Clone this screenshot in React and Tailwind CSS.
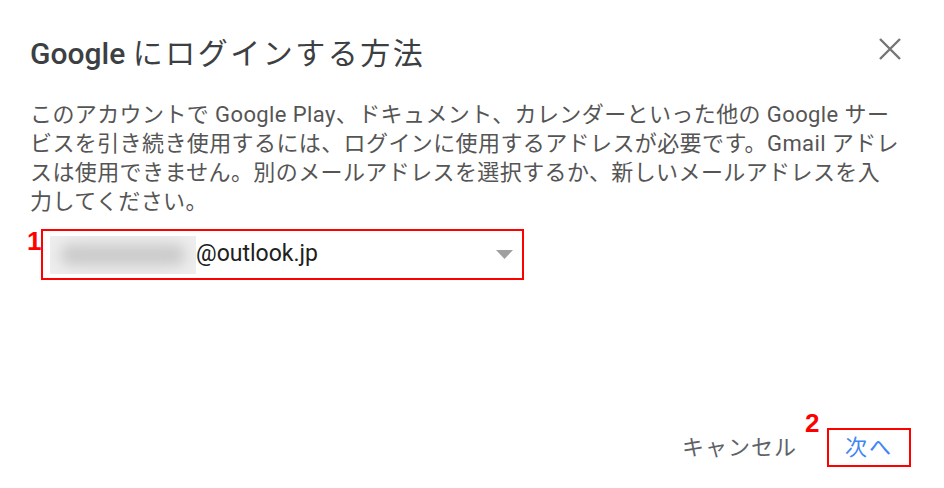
import React from "react";

const CloseIcon = () => (
  <svg width="22" height="22" viewBox="0 0 22 22" className="mt-[2px]">
    <path d="M1 1 L21 21 M21 1 L1 21" stroke="#757575" strokeWidth="2.4" fill="none" />
  </svg>
);

const App = () => {
  return (
    <div className="w-[944px] h-[488px] bg-white flex flex-col font-['Roboto','Noto_Sans_CJK_JP',sans-serif] overflow-hidden">
      <div className="flex justify-between items-start pt-[36px] pl-[30px] pr-[43px]">
        <h1 className="text-[30px] leading-[36px] text-[#3c4043]">
          <span className="font-medium">Google</span>{" "}
          <span className="tracking-[2.5px]">にログインする方法</span>
        </h1>
        <CloseIcon />
      </div>

      <p className="mt-[28px] pl-[30px] text-[22px] leading-[29px] tracking-[0.4px] text-[#555555]">
        このアカウントで Google Play、ドキュメント、カレンダーといった他の Google サー
        <br />
        ビスを引き続き使用するには、ログインに使用するアドレスが必要です。Gmail アドレ
        <br />
        スは使用できません。別のメールアドレスを選択するか、新しいメールアドレスを入
        <br />
        力してください。
      </p>

      <div className="relative ml-[41px] mt-[13px] w-[483px] h-[51px] border-2 border-[#ff0000] flex items-center pl-[7px] pr-[9px]">
        <span className="absolute left-[-16px] top-[-3px] text-[26px] leading-[26px] font-bold text-[#ff0000] font-['Liberation_Sans',sans-serif]">
          1
        </span>
        <div className="relative w-[146px] h-[38px] bg-[#eeeeee] overflow-hidden">
          <div className="absolute left-[10px] top-[8px] w-[126px] h-[22px] rounded-full bg-[#c9cac9] blur-[7px]" />
        </div>
        <span className="text-[23px] text-[#202020]">@outlook.jp</span>
        <svg width="17" height="9" viewBox="0 0 17 9" className="ml-auto">
          <path d="M0 0 H17 L8.5 9 Z" fill="#a0a0a0" />
        </svg>
      </div>

      <div className="mt-auto flex justify-end items-center pr-[33px] pb-[21px] gap-[30px]">
        <span className="text-[22px] text-[#5f6368] tracking-[1px]">キャンセル</span>
        <div className="relative w-[84px] h-[39px] border-2 border-[#ff0000] flex items-center justify-center">
          <span className="absolute left-[-24px] top-[-20px] text-[26px] leading-[26px] font-bold text-[#ff0000] font-['Liberation_Sans',sans-serif]">
            2
          </span>
          <span className="text-[22px] text-[#4285f4] tracking-[2px]">次へ</span>
        </div>
      </div>
    </div>
  );
};

export default App;
